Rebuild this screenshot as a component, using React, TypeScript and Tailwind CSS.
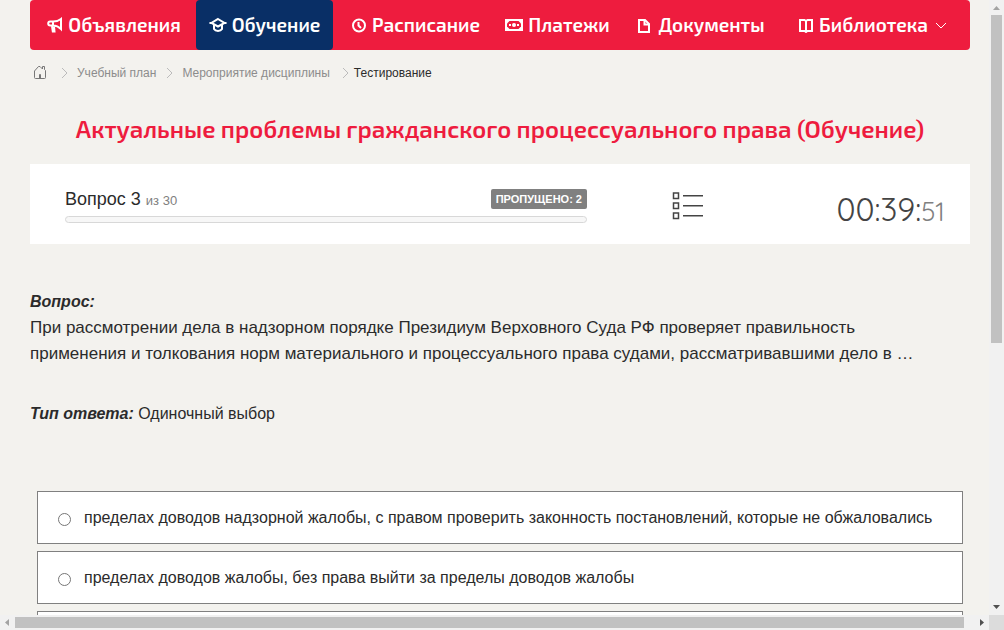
import React, { useState } from 'react';

interface NavItem {
  label: string;
  icon: React.ReactNode;
  active?: boolean;
  dropdown?: boolean;
}

const MegaphoneIcon = () => (
  <svg width="16" height="16" viewBox="0 0 16 16" fill="none" stroke="white" strokeWidth="2">
    <path d="M6 4.500H3.200a2 2 0 0 0 0 4H6c3 0 5.500 1 8 3.500V2C11.500 4 9 4.500 6 4.500v4.500" />
    <path d="M5 9l.8 5.500h1.700l-.5-5" />
  </svg>
);

const GraduationIcon = () => (
  <svg width="18" height="16" viewBox="0 0 18 16" fill="none" stroke="white" strokeWidth="2">
    <path d="M9 2l6.500 4L9 9.500 2.500 6z" />
    <path d="M5 8v4c1.500 2.500 6.500 2.500 8 0V8" />
    <path d="M.5 6h3M14.500 6h3" />
  </svg>
);

const ClockIcon = () => (
  <svg width="16" height="16" viewBox="0 0 16 16" fill="none" stroke="white" strokeWidth="2">
    <circle cx="8" cy="8.500" r="6" />
    <path d="M7.500 5v3.500l2.500 2.500" />
  </svg>
);

const MoneyIcon = () => (
  <svg width="18" height="16" viewBox="0 0 18 16">
    <path d="M0 2h18v12H0z" fill="white" />
    <path d="M4.500 4h9L16 6.500v3L13.500 12h-9L2 9.500v-3z" fill="#ee1c3e" />
    <circle cx="9" cy="8" r="2" fill="white" />
    <path d="M4 7h2v2H4zM12 7h2v2h-2z" fill="white" />
  </svg>
);

const DocumentIcon = () => (
  <svg width="16" height="16" viewBox="0 0 16 16" fill="none" stroke="white" strokeWidth="2">
    <path d="M2 3h6l4 4v8H2z" />
    <path d="M7.500 3v4.500H12" />
  </svg>
);

const BookIcon = () => (
  <svg width="16" height="16" viewBox="0 0 16 16" fill="none" stroke="white" strokeWidth="2">
    <path d="M2 3h4.500L8 4l1.500-1H14v11H9.500L8 15l-1.500-1H2z" />
    <path d="M8 4v11" />
  </svg>
);

const HomeIcon = () => (
  <svg width="14" height="14" viewBox="0 0 14 14" fill="none" stroke="#777777" strokeWidth="1">
    <path d="M1.500 5v6.500a1 1 0 0 0 1 1h9a1 1 0 0 0 1-1V4.500l-1-1v-3h-2V3L7 .5H5.500z" />
    <path d="M6.500 12.500v-4h1v4" />
  </svg>
);

const ListIcon = () => (
  <svg width="32" height="30" viewBox="0 0 32 30" fill="none" stroke="#444444" strokeWidth="1.500">
    <path d="M1.500 2h5v5.500h-5zM1.500 12h5v5.500h-5zM1.500 22h5v5.500h-5z" />
    <path d="M11 4.700h20M11 14.700h20M11 24.700h20" />
  </svg>
);

const Separator = () => (
  <svg width="8" height="12" viewBox="0 0 8 12" fill="none" stroke="#bbbbbb" className="shrink-0">
    <path d="M1 1l5 5-5 5" />
  </svg>
);

const navItems: NavItem[] = [
  { label: 'Объявления', icon: <MegaphoneIcon /> },
  { label: 'Обучение', icon: <GraduationIcon />, active: true },
  { label: 'Расписание', icon: <ClockIcon /> },
  { label: 'Платежи', icon: <MoneyIcon /> },
  { label: 'Документы', icon: <DocumentIcon /> },
  { label: 'Библиотека', icon: <BookIcon />, dropdown: true },
];

const answers = [
  'пределах доводов надзорной жалобы, с правом проверить законность постановлений, которые не обжаловались',
  'пределах доводов жалобы, без права выйти за пределы доводов жалобы',
  '',
];

const NavBar = () => (
  <nav className="grid h-[50px] grid-cols-[168fr_137fr_161fr_123fr_164fr_187fr] rounded bg-[#ee1c3e] font-['Exo_2','Open_Sans',sans-serif] text-[19px] font-semibold text-white">
    {navItems.map((item) => (
      <a
        key={item.label}
        href="#"
        className={`flex items-center justify-center gap-[5px] whitespace-nowrap ${item.active ? '-ml-0.5 mr-0.5 rounded bg-[#092f66]' : ''} ${item.dropdown ? 'pr-2' : ''}`}
      >
        <span className="shrink-0">{item.icon}</span>
        {item.label}
        {item.dropdown && (
          <svg width="12" height="8" viewBox="0 0 12 8" fill="none" stroke="white" className="mt-0.5 ml-0.5 shrink-0">
            <path d="M1 1l5 5 5-5" />
          </svg>
        )}
      </a>
    ))}
  </nav>
);

const Breadcrumbs = () => (
  <nav className="flex h-[46px] items-center text-xs text-[#8c8c8c]">
    <a href="#" aria-label="Главная" className="ml-[3px]"><HomeIcon /></a>
    <span className="mr-2 ml-[14px]"><Separator /></span>
    <a href="#">Учебный план</a>
    <span className="mr-2 ml-[10px]"><Separator /></span>
    <a href="#">Мероприятие дисциплины</a>
    <span className="mr-1 ml-[12px]"><Separator /></span>
    <span className="text-[#2b2b2b]">Тестирование</span>
  </nav>
);

const StatusPanel = () => (
  <section className="grid h-20 grid-cols-[522fr_202fr_156fr] items-center bg-white pr-[25px] pl-[35px]">
    <div className="pt-1">
      <div className="flex h-5 items-center justify-between">
        <p className="pt-0.5 text-lg leading-5">
          Вопрос 3 <small className="text-[13px] text-[#808080]">из 30</small>
        </p>
        <span className="rounded-xs bg-[#808080] px-[5px] text-[11px] leading-5 font-bold text-white">ПРОПУЩЕНО: 2</span>
      </div>
      <div className="mt-[7px] h-[7px] rounded border border-[#d8d8d8] bg-[#f7f7f7]" />
    </div>
    <button type="button" aria-label="Список вопросов" className="justify-self-center pt-1">
      <ListIcon />
    </button>
    <p className="justify-self-end pt-3 font-['Quicksand','Lato',sans-serif] text-[32px] leading-10 font-normal text-[#444444]">
      00:39:<span className="text-[26px] text-[#808080]">51</span>
    </p>
  </section>
);

const VerticalScrollbar = () => (
  <div className="flex flex-col items-center bg-[#f1f1f1]">
    <svg width="15" height="15" viewBox="0 0 15 15" fill="#a3a3a3">
      <path d="M4 10h7L7.500 6z" />
    </svg>
    <div className="flex w-[11px] grow flex-col">
      <div className="h-[56%] bg-[#c1c1c1]" />
    </div>
    <svg width="15" height="15" viewBox="0 0 15 15" fill="#505050">
      <path d="M4 5h7L7.500 9z" />
    </svg>
  </div>
);

const HorizontalScrollbar = () => (
  <div className="flex items-center bg-[#f1f1f1]">
    <svg width="15" height="15" viewBox="0 0 15 15" fill="#a3a3a3">
      <path d="M9 4v7L5 7.500z" />
    </svg>
    <div className="flex h-[11px] grow">
      <div className="w-[99%] bg-[#c1c1c1]" />
    </div>
    <svg width="15" height="15" viewBox="0 0 15 15" fill="#505050">
      <path d="M6 4v7l4-3.500z" />
    </svg>
  </div>
);

const App: React.FC = () => {
  const [selected, setSelected] = useState<number | null>(null);

  return (
    <div className="grid h-screen grid-cols-[1fr_15px] grid-rows-[1fr_15px] overflow-hidden bg-[#dcdcdc] font-['Liberation_Sans',Arial,sans-serif] text-[#2b2b2b]">
      <main className="min-h-0 overflow-hidden bg-[#f3f2ee] pr-[19px] pl-[30px]">
        <NavBar />
        <Breadcrumbs />
        <h1 className="h-[68px] pt-4 text-center font-['Exo_2','Open_Sans',sans-serif] text-2xl leading-[34px] font-semibold whitespace-nowrap text-[#ee1c3e]">
          Актуальные проблемы гражданского процессуального права (Обучение)
        </h1>
        <StatusPanel />

        <div className="mt-[45px] pr-10 leading-[26px]">
          <p className="font-bold italic">Вопрос:</p>
          <p className="text-[17px]">
            При рассмотрении дела в надзорном порядке Президиум Верховного Суда РФ проверяет правильность
            применения и толкования норм материального и процессуального права судами, рассматривавшими дело в …
          </p>
        </div>
        <p className="mt-[34px] leading-[26px]">
          <b className="italic">Тип ответа:</b> Одиночный выбор
        </p>

        <form className="mx-[7px] mt-16 flex flex-col gap-[7px]">
          {answers.map((answer, index) => (
            <label key={index} className="flex h-[53px] shrink-0 items-center border border-[#808080] bg-white pl-5">
              <input
                type="radio"
                name="answer"
                checked={selected === index}
                onChange={() => setSelected(index)}
                className="mt-1 mr-[13px] size-[13px]"
              />
              {answer}
            </label>
          ))}
        </form>
      </main>
      <VerticalScrollbar />
      <HorizontalScrollbar />
    </div>
  );
};

export default App;
